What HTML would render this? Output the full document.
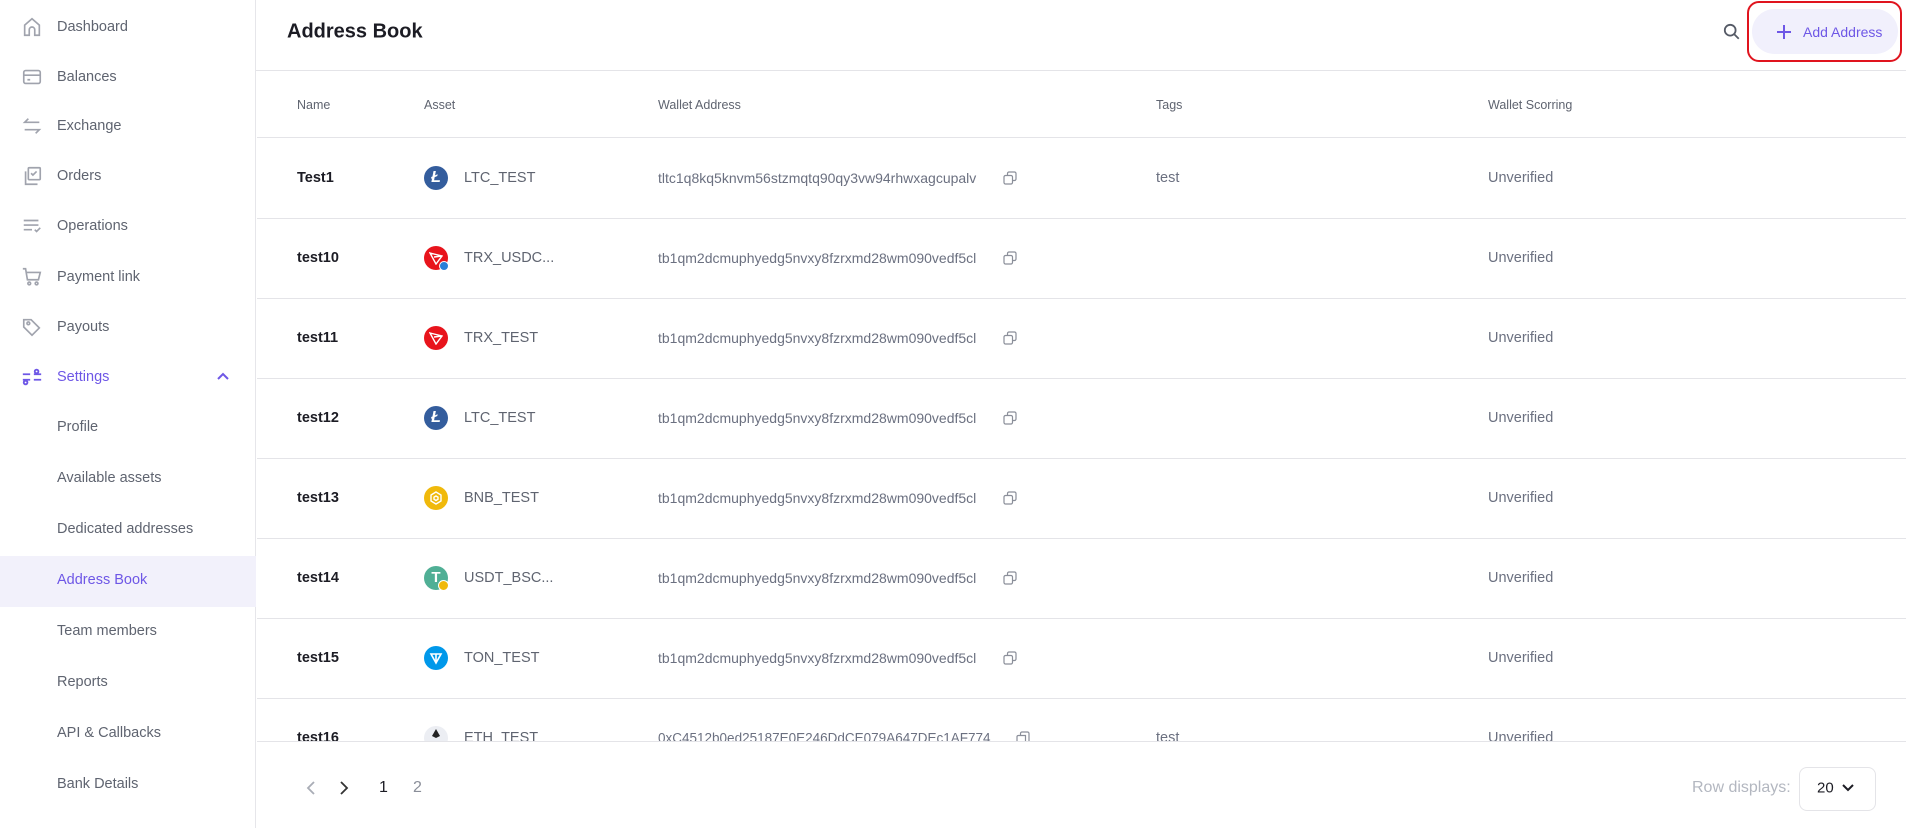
<!DOCTYPE html>
<html><head><meta charset="utf-8"><style>
*{margin:0;padding:0;box-sizing:border-box}
body{width:1906px;height:828px;overflow:hidden;background:#fff;font-family:"Liberation Sans",Arial,sans-serif;position:relative}
.sb{position:absolute;left:0;top:0;width:256px;height:828px;border-right:1px solid #e6e6ea;background:#fff}
.it{position:absolute;left:57px;font-size:14.5px;color:#5f6470;transform:translateY(-50%)}
.ic{position:absolute;left:21px;width:22px;height:22px;transform:translateY(-50%)}
.act{position:absolute;left:0;top:556px;width:256px;height:51px;background:#f2f1fb}
.hdr{position:absolute;left:256px;top:0;right:0;height:71px;border-bottom:1px solid #e4e4e8}
.t{position:absolute;transform:translateY(-50%);white-space:nowrap}
.line{position:absolute;left:257px;right:0;height:1px;background:#e4e4e8}
.th{font-size:12.5px;color:#5f6470}
.nm{font-size:14.5px;font-weight:bold;color:#1c1c24;left:297px}
.as{font-size:14.5px;color:#5f6470;left:464px}
.wa{font-size:14px;color:#6b7080;left:658px;letter-spacing:0}
.sc{font-size:14.5px;color:#6b7080;left:1488px}
.tg{font-size:14.5px;color:#6b7080;left:1156px}
.coin{position:absolute;left:424px;width:24px;height:24px;border-radius:50%;transform:translateY(-50%)}
.cp{position:absolute;left:1003px;width:14px;height:14px;transform:translateY(-50%)}
</style></head><body>
<div class="sb">
<div class="act"></div>
<svg class="ic" style="top:27px" viewBox="0 0 24 24" fill="none" stroke="#a0a3ad" stroke-width="1.8"><path d="M4 21V10l8-7 8 7v11h-5v-6a3 3 0 0 0-6 0v6z"/></svg>
<div class="it" style="top:27px">Dashboard</div>
<svg class="ic" style="top:77px" viewBox="0 0 24 24" fill="none" stroke="#a0a3ad" stroke-width="1.8"><rect x="3" y="5" width="18" height="14" rx="2"/><path d="M3 10h18M7 15h3"/></svg>
<div class="it" style="top:77px">Balances</div>
<svg class="ic" style="top:126px" viewBox="0 0 24 24" fill="none" stroke="#a0a3ad" stroke-width="1.8"><path d="M20 8H4l4-4M4 16h16l-4 4"/></svg>
<div class="it" style="top:126px">Exchange</div>
<svg class="ic" style="top:176px" viewBox="0 0 24 24" fill="none" stroke="#a0a3ad" stroke-width="1.8"><rect x="8" y="3" width="13" height="13" rx="1"/><path d="M5 7v14h13M11 9l2 2 4-4"/></svg>
<div class="it" style="top:176px">Orders</div>
<svg class="ic" style="top:226px" viewBox="0 0 24 24" fill="none" stroke="#a0a3ad" stroke-width="1.8"><path d="M3 6h16M3 11h16M3 16h9M15 16l2 2 4-4"/></svg>
<div class="it" style="top:226px">Operations</div>
<svg class="ic" style="top:277px" viewBox="0 0 24 24" fill="none" stroke="#a0a3ad" stroke-width="1.8"><path d="M2 3h3l2 12h12l2-8H6"/><circle cx="9" cy="19" r="1.5"/><circle cx="17" cy="19" r="1.5"/></svg>
<div class="it" style="top:277px">Payment link</div>
<svg class="ic" style="top:327px" viewBox="0 0 24 24" fill="none" stroke="#a0a3ad" stroke-width="1.8"><path d="M3 4v8l9 9 8-8-9-9z"/><circle cx="8" cy="8" r="1.5"/></svg>
<div class="it" style="top:327px">Payouts</div>
<svg class="ic" style="top:377px" viewBox="0 0 24 24" fill="none" stroke="#6e57e6" stroke-width="2"><path d="M2 15h8M14 15h8M2 9h8M14 9h8"/><circle cx="5" cy="18" r="2"/><circle cx="17" cy="6" r="2"/></svg>
<div class="it" style="top:377px;color:#6e57e6">Settings</div>
<svg style="position:absolute;left:216px;top:371px" width="14" height="10" viewBox="0 0 14 10" fill="none" stroke="#6e57e6" stroke-width="2"><path d="M2 8l5-5 5 5"/></svg>
<div class="it" style="top:427px">Profile</div>
<div class="it" style="top:478px">Available assets</div>
<div class="it" style="top:529px">Dedicated addresses</div>
<div class="it" style="top:580px;color:#6e57e6">Address Book</div>
<div class="it" style="top:631px">Team members</div>
<div class="it" style="top:682px">Reports</div>
<div class="it" style="top:733px">API &amp; Callbacks</div>
<div class="it" style="top:784px">Bank Details</div>
</div>

<div class="hdr"></div>
<div class="t" style="left:287px;top:32px;font-size:20px;font-weight:bold;color:#1c1c24">Address Book</div>
<svg style="position:absolute;left:1723px;top:23px" width="18" height="18" viewBox="0 0 20 20" fill="none" stroke="#555a66" stroke-width="2"><circle cx="8" cy="8" r="6"/><path d="M12.5 12.5l5 5"/></svg>
<div style="position:absolute;left:1747px;top:1px;width:155px;height:61px;border:2px solid #e0141e;border-radius:12px"></div>
<div style="position:absolute;left:1752px;top:9px;width:146px;height:45px;border-radius:23px;background:#f1f0fc"></div>
<svg style="position:absolute;left:1776px;top:24px" width="16" height="16" viewBox="0 0 16 16" stroke="#6e57e6" stroke-width="2"><path d="M8 1v14M1 8h14"/></svg>
<div class="t" style="left:1803px;top:32px;font-size:14px;color:#6e57e6">Add Address</div>

<div class="t th" style="left:297px;top:105px">Name</div>
<div class="t th" style="left:424px;top:105px">Asset</div>
<div class="t th" style="left:658px;top:105px">Wallet Address</div>
<div class="t th" style="left:1156px;top:105px">Tags</div>
<div class="t th" style="left:1488px;top:105px">Wallet Scorring</div>
<div class="line" style="top:137px"></div>

<div style="position:absolute;left:257px;top:138px;right:0;height:603px;overflow:hidden">
<div style="position:absolute;left:-257px;top:-138px;width:1906px;height:741px">
<div class="t nm" style="top:178px">Test1</div>
<div class="coin" style="top:178px;background:#345d9d;color:#fff;font-weight:bold;font-size:16px;text-align:center;line-height:24px;font-style:italic">Ł</div>
<div class="t as" style="top:178px">LTC_TEST</div>
<div class="t wa" style="top:178px">tltc1q8kq5knvm56stzmqtq90qy3vw94rhwxagcupalv</div>
<div class="t tg" style="top:178px">test</div>
<div class="t sc" style="top:178px">Unverified</div>
<div class="line" style="top:218px"></div>

<div class="t nm" style="top:258px">test10</div>
<div class="coin" style="top:258px;background:#e8141c"></div>
<svg style="position:absolute;left:429px;top:251px" width="14" height="14" viewBox="0 0 14 14" fill="none" stroke="#fff" stroke-width="1.4"><path d="M1 2l12 3-6 8zM1 2l6 11M13 5L5 6"/></svg>
<div style="position:absolute;left:439px;top:261px;width:10px;height:10px;border-radius:50%;background:#2a7fd8;border:1.5px solid #fff"></div>
<div class="t as" style="top:258px">TRX_USDC...</div>
<div class="t wa" style="top:258px">tb1qm2dcmuphyedg5nvxy8fzrxmd28wm090vedf5cl</div>
<div class="t sc" style="top:258px">Unverified</div>
<div class="line" style="top:298px"></div>

<div class="t nm" style="top:338px">test11</div>
<div class="coin" style="top:338px;background:#e8141c"></div>
<svg style="position:absolute;left:429px;top:331px" width="14" height="14" viewBox="0 0 14 14" fill="none" stroke="#fff" stroke-width="1.4"><path d="M1 2l12 3-6 8zM1 2l6 11M13 5L5 6"/></svg>
<div class="t as" style="top:338px">TRX_TEST</div>
<div class="t wa" style="top:338px">tb1qm2dcmuphyedg5nvxy8fzrxmd28wm090vedf5cl</div>
<div class="t sc" style="top:338px">Unverified</div>
<div class="line" style="top:378px"></div>

<div class="t nm" style="top:418px">test12</div>
<div class="coin" style="top:418px;background:#345d9d;color:#fff;font-weight:bold;font-size:16px;text-align:center;line-height:24px;font-style:italic">Ł</div>
<div class="t as" style="top:418px">LTC_TEST</div>
<div class="t wa" style="top:418px">tb1qm2dcmuphyedg5nvxy8fzrxmd28wm090vedf5cl</div>
<div class="t sc" style="top:418px">Unverified</div>
<div class="line" style="top:458px"></div>

<div class="t nm" style="top:498px">test13</div>
<div class="coin" style="top:498px;background:#f0b90b"></div>
<svg style="position:absolute;left:429px;top:491px" width="14" height="14" viewBox="0 0 14 14" fill="none" stroke="#fff" stroke-width="1.4"><path d="M7 1l5 3v6l-5 3-5-3V4z"/><path d="M7 5l2 1.2v2L7 9.5 5 8.2v-2z"/></svg>
<div class="t as" style="top:498px">BNB_TEST</div>
<div class="t wa" style="top:498px">tb1qm2dcmuphyedg5nvxy8fzrxmd28wm090vedf5cl</div>
<div class="t sc" style="top:498px">Unverified</div>
<div class="line" style="top:538px"></div>

<div class="t nm" style="top:578px">test14</div>
<div class="coin" style="top:578px;background:#50af95;color:#fff;font-weight:bold;font-size:15px;text-align:center;line-height:24px">T</div><div style="position:absolute;left:438px;top:580px;width:11px;height:11px;border-radius:50%;background:#f0b90b;border:1.5px solid #fff"></div>
<div class="t as" style="top:578px">USDT_BSC...</div>
<div class="t wa" style="top:578px">tb1qm2dcmuphyedg5nvxy8fzrxmd28wm090vedf5cl</div>
<div class="t sc" style="top:578px">Unverified</div>
<div class="line" style="top:618px"></div>

<div class="t nm" style="top:658px">test15</div>
<div class="coin" style="top:658px;background:#0098ea"></div>
<svg style="position:absolute;left:429px;top:651px" width="14" height="14" viewBox="0 0 14 14" fill="none" stroke="#fff" stroke-width="1.6"><path d="M2 3h10L7 12zM7 3v9"/></svg>
<div class="t as" style="top:658px">TON_TEST</div>
<div class="t wa" style="top:658px">tb1qm2dcmuphyedg5nvxy8fzrxmd28wm090vedf5cl</div>
<div class="t sc" style="top:658px">Unverified</div>
<div class="line" style="top:698px"></div>

<div class="t nm" style="top:738px">test16</div>
<div class="coin" style="top:738px;background:#eceef3"></div>
<svg style="position:absolute;left:431px;top:729px" width="10" height="14" viewBox="0 0 10 14" fill="#222"><path d="M5 0L1 7l4 2 4-2z"/></svg>
<div class="t as" style="top:738px">ETH_TEST</div>
<div class="t wa" style="top:738px;font-size:13.5px">0xC4512b0ed25187E0E246DdCE079A647DEc1AF774</div>
<div class="t tg" style="top:738px">test</div>
<div class="t sc" style="top:738px">Unverified</div>
</div></div>

<svg class="cp" style="top:178px" viewBox="0 0 14 14" fill="none" stroke="#8a8e99" stroke-width="1.2"><rect x="1" y="4.5" width="8.5" height="8.5" rx="1.5"/><path d="M4.5 4.5V2.5A1.5 1.5 0 0 1 6 1h5.5A1.5 1.5 0 0 1 13 2.5V8a1.5 1.5 0 0 1-1.5 1.5h-2"/></svg>
<svg class="cp" style="top:258px" viewBox="0 0 14 14" fill="none" stroke="#8a8e99" stroke-width="1.2"><rect x="1" y="4.5" width="8.5" height="8.5" rx="1.5"/><path d="M4.5 4.5V2.5A1.5 1.5 0 0 1 6 1h5.5A1.5 1.5 0 0 1 13 2.5V8a1.5 1.5 0 0 1-1.5 1.5h-2"/></svg>
<svg class="cp" style="top:338px" viewBox="0 0 14 14" fill="none" stroke="#8a8e99" stroke-width="1.2"><rect x="1" y="4.5" width="8.5" height="8.5" rx="1.5"/><path d="M4.5 4.5V2.5A1.5 1.5 0 0 1 6 1h5.5A1.5 1.5 0 0 1 13 2.5V8a1.5 1.5 0 0 1-1.5 1.5h-2"/></svg>
<svg class="cp" style="top:418px" viewBox="0 0 14 14" fill="none" stroke="#8a8e99" stroke-width="1.2"><rect x="1" y="4.5" width="8.5" height="8.5" rx="1.5"/><path d="M4.5 4.5V2.5A1.5 1.5 0 0 1 6 1h5.5A1.5 1.5 0 0 1 13 2.5V8a1.5 1.5 0 0 1-1.5 1.5h-2"/></svg>
<svg class="cp" style="top:498px" viewBox="0 0 14 14" fill="none" stroke="#8a8e99" stroke-width="1.2"><rect x="1" y="4.5" width="8.5" height="8.5" rx="1.5"/><path d="M4.5 4.5V2.5A1.5 1.5 0 0 1 6 1h5.5A1.5 1.5 0 0 1 13 2.5V8a1.5 1.5 0 0 1-1.5 1.5h-2"/></svg>
<svg class="cp" style="top:578px" viewBox="0 0 14 14" fill="none" stroke="#8a8e99" stroke-width="1.2"><rect x="1" y="4.5" width="8.5" height="8.5" rx="1.5"/><path d="M4.5 4.5V2.5A1.5 1.5 0 0 1 6 1h5.5A1.5 1.5 0 0 1 13 2.5V8a1.5 1.5 0 0 1-1.5 1.5h-2"/></svg>
<svg class="cp" style="top:658px" viewBox="0 0 14 14" fill="none" stroke="#8a8e99" stroke-width="1.2"><rect x="1" y="4.5" width="8.5" height="8.5" rx="1.5"/><path d="M4.5 4.5V2.5A1.5 1.5 0 0 1 6 1h5.5A1.5 1.5 0 0 1 13 2.5V8a1.5 1.5 0 0 1-1.5 1.5h-2"/></svg>
<svg style="position:absolute;left:1016px;top:731px" width="14" height="10" viewBox="0 0 14 10" fill="none" stroke="#8a8e99" stroke-width="1.2"><path d="M1 10V5.5A1.5 1.5 0 0 1 2.5 4.5H9.5V10M4.5 4.5V2.5A1.5 1.5 0 0 1 6 1h5.5A1.5 1.5 0 0 1 13 2.5V10"/></svg>

<div class="line" style="top:741px"></div>
<svg style="position:absolute;left:306px;top:781px" width="10" height="14" viewBox="0 0 10 14" fill="none" stroke="#a9adb6" stroke-width="1.8"><path d="M8 1L2 7l6 6"/></svg>
<svg style="position:absolute;left:339px;top:781px" width="10" height="14" viewBox="0 0 10 14" fill="none" stroke="#333" stroke-width="1.8"><path d="M2 1l6 6-6 6"/></svg>
<div class="t" style="left:379px;top:788px;font-size:16px;color:#1c1c24">1</div>
<div class="t" style="left:413px;top:788px;font-size:16px;color:#8a8e99">2</div>
<div class="t" style="left:1692px;top:788px;font-size:16px;color:#b3b7c0">Row displays:</div>
<div style="position:absolute;left:1799px;top:767px;width:77px;height:44px;border:1px solid #e4e4e8;border-radius:8px"></div>
<div class="t" style="left:1817px;top:788px;font-size:15px;color:#1c1c24">20</div>
<svg style="position:absolute;left:1842px;top:784px" width="12" height="8" viewBox="0 0 12 8" fill="none" stroke="#1c1c24" stroke-width="2"><path d="M1 1l5 5 5-5"/></svg>
</body></html>
